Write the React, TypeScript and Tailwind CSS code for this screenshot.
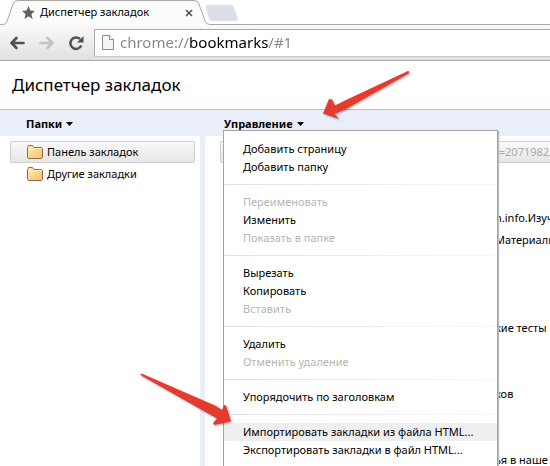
type MenuEntry = { label: string; disabled?: boolean; active?: boolean };

const menuGroups: MenuEntry[][] = [
  [{ label: 'Добавить страницу' }, { label: 'Добавить папку' }],
  [
    { label: 'Переименовать', disabled: true },
    { label: 'Изменить' },
    { label: 'Показать в папке', disabled: true },
  ],
  [{ label: 'Вырезать' }, { label: 'Копировать' }, { label: 'Вставить', disabled: true }],
  [{ label: 'Удалить' }, { label: 'Отменить удаление', disabled: true }],
  [{ label: 'Упорядочить по заголовкам' }],
  [
    { label: 'Импортировать закладки из файла HTML...', active: true },
    { label: 'Экспортировать закладки в файл HTML...' },
  ],
];

const bookmarks = ['', '', 'n.info.Изуч', 'Материаль', '', '', '', 'кие тесты', '', '', 'ков', '', '', 'ья в наше'];

function FolderIcon() {
  return (
    <svg width="16" height="14" viewBox="0 0 16 14" className="shrink-0" aria-hidden="true">
      <defs>
        <linearGradient id="folderFill" x1="0" y1="0" x2="1" y2="1">
          <stop offset="0" stopColor="#ffe9b5" />
          <stop offset="1" stopColor="#f9c069" />
        </linearGradient>
      </defs>
      <path d="M.5 12V2.500L1.500.500h4L7 2.500h7.500l1 1V12l-1 1.500h-13z" fill="url(#folderFill)" stroke="#8b6c45" />
      <path d="M1.500 4.500h5L8 3.500h6.300" fill="none" stroke="#fff3d3" />
    </svg>
  );
}

function FolderRow({ label, selected }: { label: string; selected?: boolean }) {
  return (
    <button
      type="button"
      className={
        'flex h-[22px] w-full items-center gap-1 rounded-[2px] border pl-4 text-left ' +
        (selected ? 'border-[#d0d0d0] bg-linear-to-b from-[#f9f9f9] to-[#e6e6e6]' : 'border-transparent')
      }
    >
      <FolderIcon />
      <span className="whitespace-nowrap">{label}</span>
    </button>
  );
}

function Caret() {
  return (
    <svg width="7" height="4" viewBox="0 0 7 4" aria-hidden="true">
      <path d="M0 0h7L3.500 4z" />
    </svg>
  );
}

function TabStrip() {
  return (
    <div className="relative flex h-[25px] items-center bg-white">
      <svg className="absolute inset-x-0 top-0 h-[25px] w-full" aria-hidden="true">
        <path d="M0 24.500h3q3 0 4-3L13 4q1-3.500 5-3.500h176q4 0 5 3.500l6 17q1 3.500 5 3.500h4000" fill="#fbfbfb" stroke="#a8a8a8" />
        <path d="M208 5h22q3 0 4 3l4 11q0 2-3 2h-22q-3 0-4-3l-3-10q-1-3 2-3z" fill="#d9dee7" stroke="#e9ecf1" />
      </svg>
      <div className="relative flex w-[193px] items-center pl-[22px]">
        <svg width="13" height="13" viewBox="0 0 24 24" fill="#606060" aria-hidden="true">
          <path d="M12 0l3.500 8.500 8.500.500-6.600 5.800L19.500 24 12 19l-7.500 5 2.100-9.200L0 9l8.500-.500z" />
        </svg>
        <span className="ml-[5px] flex-1 whitespace-nowrap">Диспетчер закладок</span>
        <button type="button" aria-label="Закрыть вкладку">
          <svg width="8" height="8" viewBox="0 0 8 8" className="block" aria-hidden="true">
            <path d="M1 1l6 6M7 1L1 7" stroke="#555" strokeWidth="1.700" />
          </svg>
        </button>
      </div>
    </div>
  );
}

function Toolbar() {
  return (
    <div className="flex h-9 items-center border-b border-[#a6a6a6] bg-linear-to-b from-[#fafafa] to-[#e0e0e0] pl-[9px]">
      <button type="button" aria-label="Назад">
        <svg width="16" height="14" viewBox="0 0 16 14" className="block" fill="none" stroke="#515151" strokeWidth="2.600" strokeLinecap="round" strokeLinejoin="round" aria-hidden="true">
          <path d="M7.500 2L2.500 7l5 5M3 7h11.500" />
        </svg>
      </button>
      <button type="button" aria-label="Вперёд" className="ml-[14px]">
        <svg width="16" height="14" viewBox="0 0 16 14" className="block" fill="none" stroke="#c3c3c3" strokeWidth="2.600" strokeLinecap="round" strokeLinejoin="round" aria-hidden="true">
          <path d="M8.500 2l5 5-5 5M13 7H1.500" />
        </svg>
      </button>
      <button type="button" aria-label="Обновить" className="ml-[13px]">
        <svg width="16" height="16" viewBox="0 0 16 16" className="block" aria-hidden="true">
          <path d="M13.300 10.500A5.700 5.700 0 1 1 12 4" fill="none" stroke="#515151" strokeWidth="2.500" />
          <path d="M15.500 1v6.500H9z" fill="#515151" />
        </svg>
      </button>
      <div className="ml-[10px] flex h-7 flex-1 items-center rounded-l-[2px] border border-r-0 border-[#a9a9a9] border-b-[#c4c4c4] bg-white pl-[7px]">
        <svg width="12" height="15" viewBox="0 0 12 15" className="shrink-0" aria-hidden="true">
          <path d="M.500.500h7l4 4v10H.500z" fill="#f4f4f4" stroke="#8d8d8d" />
          <path d="M7.500.500v4h4" fill="#fff" stroke="#8d8d8d" />
        </svg>
        <input
          type="text"
          aria-label="Адрес"
          defaultValue="chrome://bookmarks/#1"
          className="ml-[6px] min-w-0 flex-1 bg-[linear-gradient(90deg,#858585_70px,#000_70px,#000_148px,#858585_148px)] bg-clip-text text-[15px] text-transparent outline-none"
        />
      </div>
    </div>
  );
}

function OrganizeMenu() {
  return (
    <div
      role="menu"
      className="absolute top-full left-0 z-10 w-[275px] border border-[#a3a3aa] bg-white py-[9px] shadow-[1px_1px_1px_#bbb]"
    >
      {menuGroups.map((group, index) => (
        <div key={index}>
          {index > 0 && <div className="my-2 h-px bg-linear-to-r from-[#e0e0e0] to-[#f8f8f8]" />}
          {group.map((entry) => (
            <button
              key={entry.label}
              type="button"
              role="menuitem"
              disabled={entry.disabled}
              className={
                'block h-[18px] w-full pl-[19px] text-left leading-[18px] font-normal whitespace-nowrap ' +
                (entry.disabled ? 'text-[#b5b5b5] ' : 'text-black ') +
                (entry.active ? 'bg-[#efefef]' : '')
              }
            >
              {entry.label}
            </button>
          ))}
        </div>
      ))}
    </div>
  );
}

function PointerArrows() {
  return (
    <svg
      className="pointer-events-none absolute top-0 left-0 z-20 h-[466px] w-[550px] drop-shadow-[1px_1px_1px_rgba(0,0,0,0.35)]"
      viewBox="0 0 550 466"
      fill="#e53a2e"
      aria-hidden="true"
    >
      <path d="M408 71q2 .500 .500 2.500L346 109l-11.500 5 4.500 5-16-5.500 6-14.500 3 .500 3 6 10-5z" />
      <path d="M140 374l2-.300L216 406l6 4 2-5 2 .500 5 16-17 3.500-1-2 4-4.500-9-5-66-37.500z" />
    </svg>
  );
}

export default function App() {
  return (
    <div className="relative flex h-screen flex-col overflow-hidden bg-white font-['Noto_Sans','Open_Sans',sans-serif] text-[11px] text-black">
      <TabStrip />
      <Toolbar />
      <h1 className="flex h-12 shrink-0 items-center pl-3 text-[17px] whitespace-nowrap">Диспетчер закладок</h1>
      <div className="flex h-[27px] shrink-0 border-t border-[#a5c2ed] bg-[#e9eef9] font-bold">
        <div className="w-[223px] shrink-0 pl-[26px]">
          <button type="button" className="flex h-7 items-center gap-1">
            Папки <Caret />
          </button>
        </div>
        <div className="relative h-5">
          <button type="button" aria-haspopup="menu" aria-expanded="true" className="flex h-7 items-center gap-1 pl-px">
            Управление <Caret />
          </button>
          <OrganizeMenu />
        </div>
      </div>
      <div className="flex min-h-0 flex-1">
        <nav className="w-[205px] shrink-0 border-r-5 border-[#e9eef9] py-[5px] pr-[5px] pl-[10px]">
          <FolderRow label="Панель закладок" selected />
          <FolderRow label="Другие закладки" />
        </nav>
        <main className="min-w-0 flex-1 overflow-hidden py-[5px] pl-[15px] whitespace-nowrap">
          <div className="flex h-[22px] items-center rounded-l-[2px] border border-r-0 border-[#d0d0d0] bg-linear-to-b from-[#f9f9f9] to-[#e6e6e6] pl-[271px] text-[#aaa]">
            d=2071982
          </div>
          {bookmarks.map((title, index) => (
            <div key={index} className="flex h-[22px] items-center pl-[275px]">
              {title}
            </div>
          ))}
        </main>
      </div>
      <PointerArrows />
    </div>
  );
}
